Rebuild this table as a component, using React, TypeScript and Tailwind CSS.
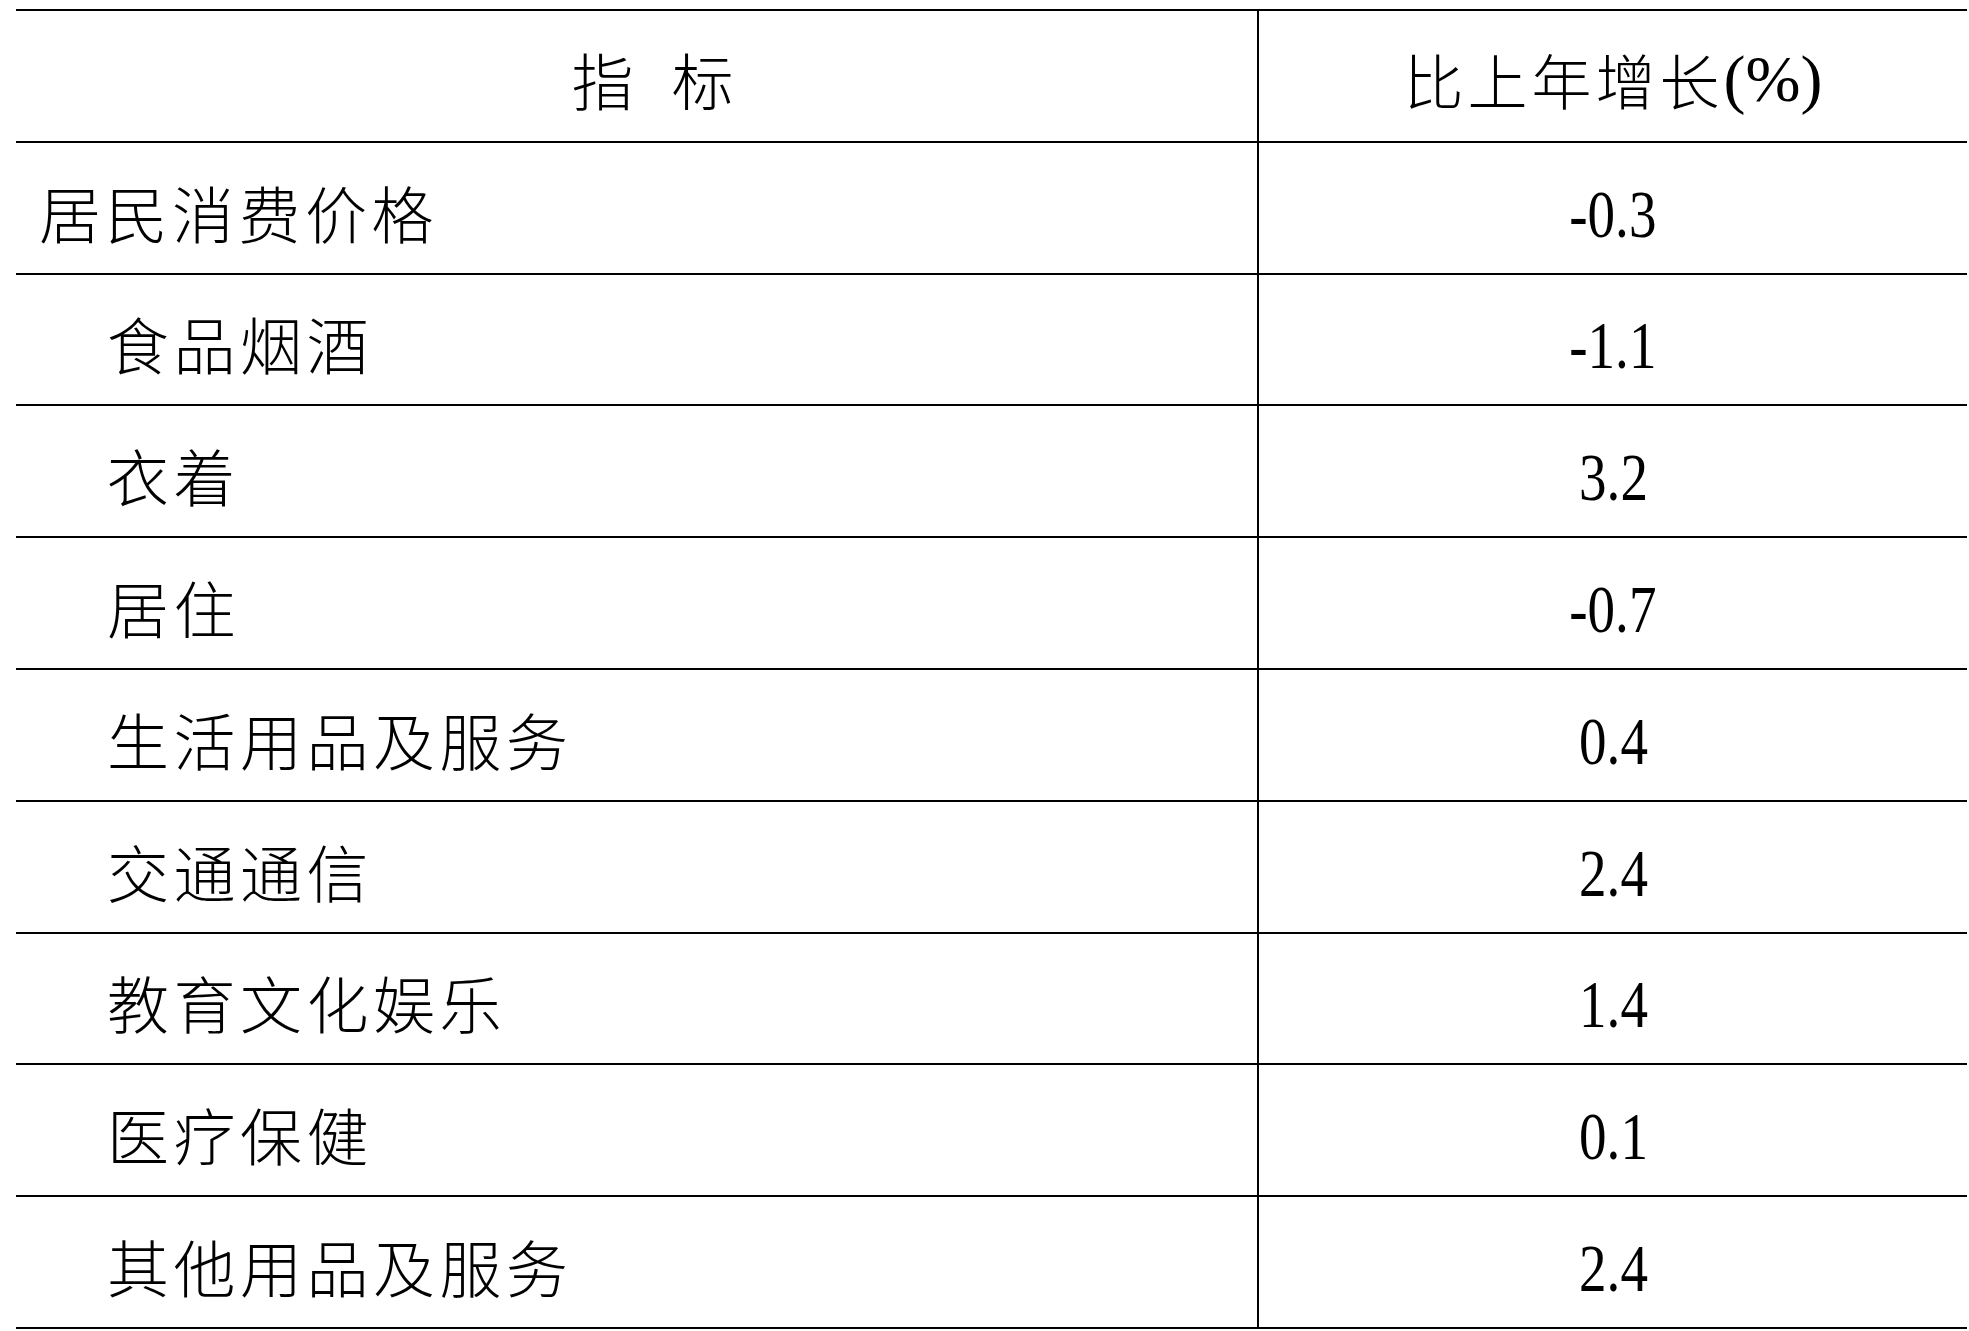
const CJK = "font-['Noto_Sans_CJK_SC',sans-serif]";

const rows = [
  { name: "居民消费价格", value: "-0.3", sub: false },
  { name: "食品烟酒", value: "-1.1", sub: true },
  { name: "衣着", value: "3.2", sub: true },
  { name: "居住", value: "-0.7", sub: true },
  { name: "生活用品及服务", value: "0.4", sub: true },
  { name: "交通通信", value: "2.4", sub: true },
  { name: "教育文化娱乐", value: "1.4", sub: true },
  { name: "医疗保健", value: "0.1", sub: true },
  { name: "其他用品及服务", value: "2.4", sub: true },
];

export default function App() {
  return (
    <div className="min-h-screen bg-white pt-[9px] pl-[16px] text-black">
      <div className="w-[1951px] border-t-2 border-black">
        {/* header */}
        <div className="flex h-[131.8px] border-b-2 border-black">
          <div className={`flex w-[1243px] items-center justify-center gap-[38px] border-r-2 border-black pt-[6px] pl-[32px] text-[62px] leading-none font-light ${CJK}`}>
            <span>指</span>
            <span>标</span>
          </div>
          <div className="flex flex-1 items-center justify-center pt-[6px]">
            <span className={`text-[60px] leading-none font-light tracking-[4px] ${CJK}`}>比上年增长</span>
            <span className="font-['Liberation_Serif',serif] text-[66px] leading-none">(%)</span>
          </div>
        </div>

        {rows.map((r) => (
          <div key={r.name} className="flex h-[131.8px] border-b-2 border-black">
            <div
              className={`flex w-[1243px] items-center border-r-2 border-black pt-[8px] text-[62px] leading-none font-light tracking-[4.5px] ${CJK} ${
                r.sub ? "pl-[91px]" : "pl-[23px]"
              }`}
            >
              {r.name}
            </div>
            <div className="flex flex-1 items-center justify-center pt-[12px]">
              <span className="inline-block scale-x-[0.81] font-['Liberation_Serif',serif] text-[68px] leading-none">
                {r.value}
              </span>
            </div>
          </div>
        ))}
      </div>
    </div>
  );
}
